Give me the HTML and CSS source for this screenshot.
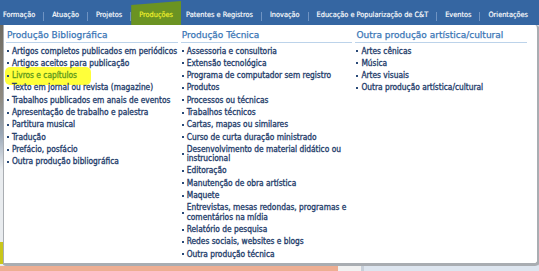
FILE: index.html
```html
<!DOCTYPE html>
<html lang="pt-BR">
<head>
    <meta charset="utf-8">
    <title>Currículo - Produções</title>
    <link rel="stylesheet" href="styles.css">
</head>
<body>
    <nav class="menu">
        <ul class="menu-list">
            <li><a href="#">Formação</a></li>
            <li><a href="#">Atuação</a></li>
            <li><a href="#">Projetos</a></li>
            <li class="active"><a href="#">Produções</a></li>
            <li><a href="#">Patentes e Registros</a></li>
            <li><a href="#">Inovação</a></li>
            <li><a href="#">Educação e Popularização de C&amp;T</a></li>
            <li><a href="#">Eventos</a></li>
            <li><a href="#">Orientações</a></li>
        </ul>
    </nav>

    <div class="backdrop">
        <div class="photo-edge"></div>
        <div class="page-main"></div>
        <div class="page-side"></div>
        <div class="strip-orange"></div>
        <div class="strip-gap"></div>
        <div class="strip-side"></div>
    </div>

    <div class="dropdown">
        <div class="col">
            <h3 class="col-title">Produção Bibliográfica</h3>
            <ul class="col-list">
                <li>Artigos completos publicados em periódicos</li>
                <li>Artigos aceitos para publicação</li>
                <li class="marked">Livros e capítulos</li>
                <li>Texto em jornal ou revista (magazine)</li>
                <li>Trabalhos publicados em anais de eventos</li>
                <li>Apresentação de trabalho e palestra</li>
                <li>Partitura musical</li>
                <li>Tradução</li>
                <li>Prefácio, posfácio</li>
                <li>Outra produção bibliográfica</li>
            </ul>
        </div>
        <div class="col">
            <h3 class="col-title">Produção Técnica</h3>
            <ul class="col-list">
                <li>Assessoria e consultoria</li>
                <li>Extensão tecnológica</li>
                <li>Programa de computador sem registro</li>
                <li>Produtos</li>
                <li>Processos ou técnicas</li>
                <li>Trabalhos técnicos</li>
                <li>Cartas, mapas ou similares</li>
                <li>Curso de curta duração ministrado</li>
                <li>Desenvolvimento de material didático ou instrucional</li>
                <li>Editoração</li>
                <li>Manutenção de obra artística</li>
                <li>Maquete</li>
                <li>Entrevistas, mesas redondas, programas e comentários na mídia</li>
                <li>Relatório de pesquisa</li>
                <li>Redes sociais, websites e blogs</li>
                <li>Outra produção técnica</li>
            </ul>
        </div>
        <div class="col">
            <h3 class="col-title">Outra produção artística/cultural</h3>
            <ul class="col-list">
                <li>Artes cênicas</li>
                <li>Música</li>
                <li>Artes visuais</li>
                <li>Outra produção artística/cultural</li>
            </ul>
        </div>
    </div>
</body>
</html>
```
FILE: styles.css
```css
body {
    margin: 0;
    height: 271px;
    overflow: hidden;
    display: flex;
    flex-direction: column;
    background: #dfe5ec;
    font-family: "DejaVu Sans Condensed", "DejaVu Sans", sans-serif;
}

/* barra de navegação */
.menu {
    height: 25px;
    background: #3566a2;
    flex-shrink: 0;
}
.menu-list {
    list-style: none;
    margin: 0;
    padding: 0 0 0 3px;
    display: flex;
    height: 100%;
}
.menu-list li {
    display: flex;
    align-items: flex-end;
}
.menu-list li + li::before {
    content: "";
    width: 1px;
    height: 9px;
    margin-bottom: 4px;
    background: #6f93c2;
}
.menu-list a {
    display: block;
    padding: 0 8px 5px;
    line-height: 11px;
    font-size: 7.3px;
    color: #fff;
    text-decoration: none;
    -webkit-text-stroke: 0.15px #fff;
}
.menu-list li:first-child a {
    padding-left: 0;
}
.menu-list .active a {
    color: #f2f22c;
    -webkit-text-stroke-color: #f2f22c;
    background: #6b9322;
    padding-top: 8px;
    margin-right: -4px;
    clip-path: polygon(0 4px, 100% 0, 100% 100%, 0 100%);
}

/* fundo da página atrás do menu */
.backdrop {
    flex: 1;
    display: grid;
    grid-template-columns: 338px 23px 1fr;
    grid-template-rows: 1fr 5px;
}
.photo-edge {
    grid-column: 1;
    background: linear-gradient(#6e6a60 0, #8f8a80 30%, #9aa7b6 45%, #e9ecef 60%, #e9ecef 90%, #c9c61a 90%, #c9c61a 99%, #e9ecef 99%);
}
.page-main {
    grid-column: 2;
    background: #eceff2;
}
.page-side {
    grid-column: 3;
    background: #d6dde6;
}
.strip-orange { background: #eeae92; }
.strip-gap { background: #f1f1f1; }
.strip-side { background: #dde5ef; border-left: 3px solid #c8d0da; }

/* menu suspenso */
.dropdown {
    position: absolute;
    top: 25px;
    left: 3px;
    width: 527px;
    display: grid;
    grid-template-columns: repeat(3, 171.7px);
    column-gap: 3px;
    padding: 3.5px 4px 3px 2px;
    background: #fff;
    border: 1px solid #a9adb2;
    border-top: 0;
    border-right-width: 3px;
    border-bottom-width: 3px;
    border-radius: 0 5px 5px 3px;
}
.col-title {
    margin: 0;
    padding: 0 0 1.5px 1px;
    line-height: 12px;
    font-family: "DejaVu Sans", sans-serif;
    font-size: 9px;
    font-weight: normal;
    color: #3a76b6;
    -webkit-text-stroke: 0.25px #3a76b6;
    border-bottom: 1.5px solid #bcd3ea;
}
.col-list {
    list-style: none;
    margin: 2px 0 0;
    padding: 0;
}
.col-list li {
    display: flex;
    align-items: center;
    padding: 1.5px 0 1.5px 1px;
    line-height: 9.3px;
    font-size: 8.3px;
    color: #1f3d6b;
    -webkit-text-stroke: 0.3px #1f3d6b;
}
.col-list li::before {
    content: "";
    flex-shrink: 0;
    width: 2px;
    height: 2px;
    margin-right: 3px;
    background: #2a4a78;
}
.col-list li.marked {
    width: fit-content;
    margin: -3px 0 -3px -1px;
    padding: 4.5px 14px 4.5px 2px;
    color: #5f9a1c;
    -webkit-text-stroke-color: #5f9a1c;
    background: #ffff3a;
    border-radius: 5px;
}
```
